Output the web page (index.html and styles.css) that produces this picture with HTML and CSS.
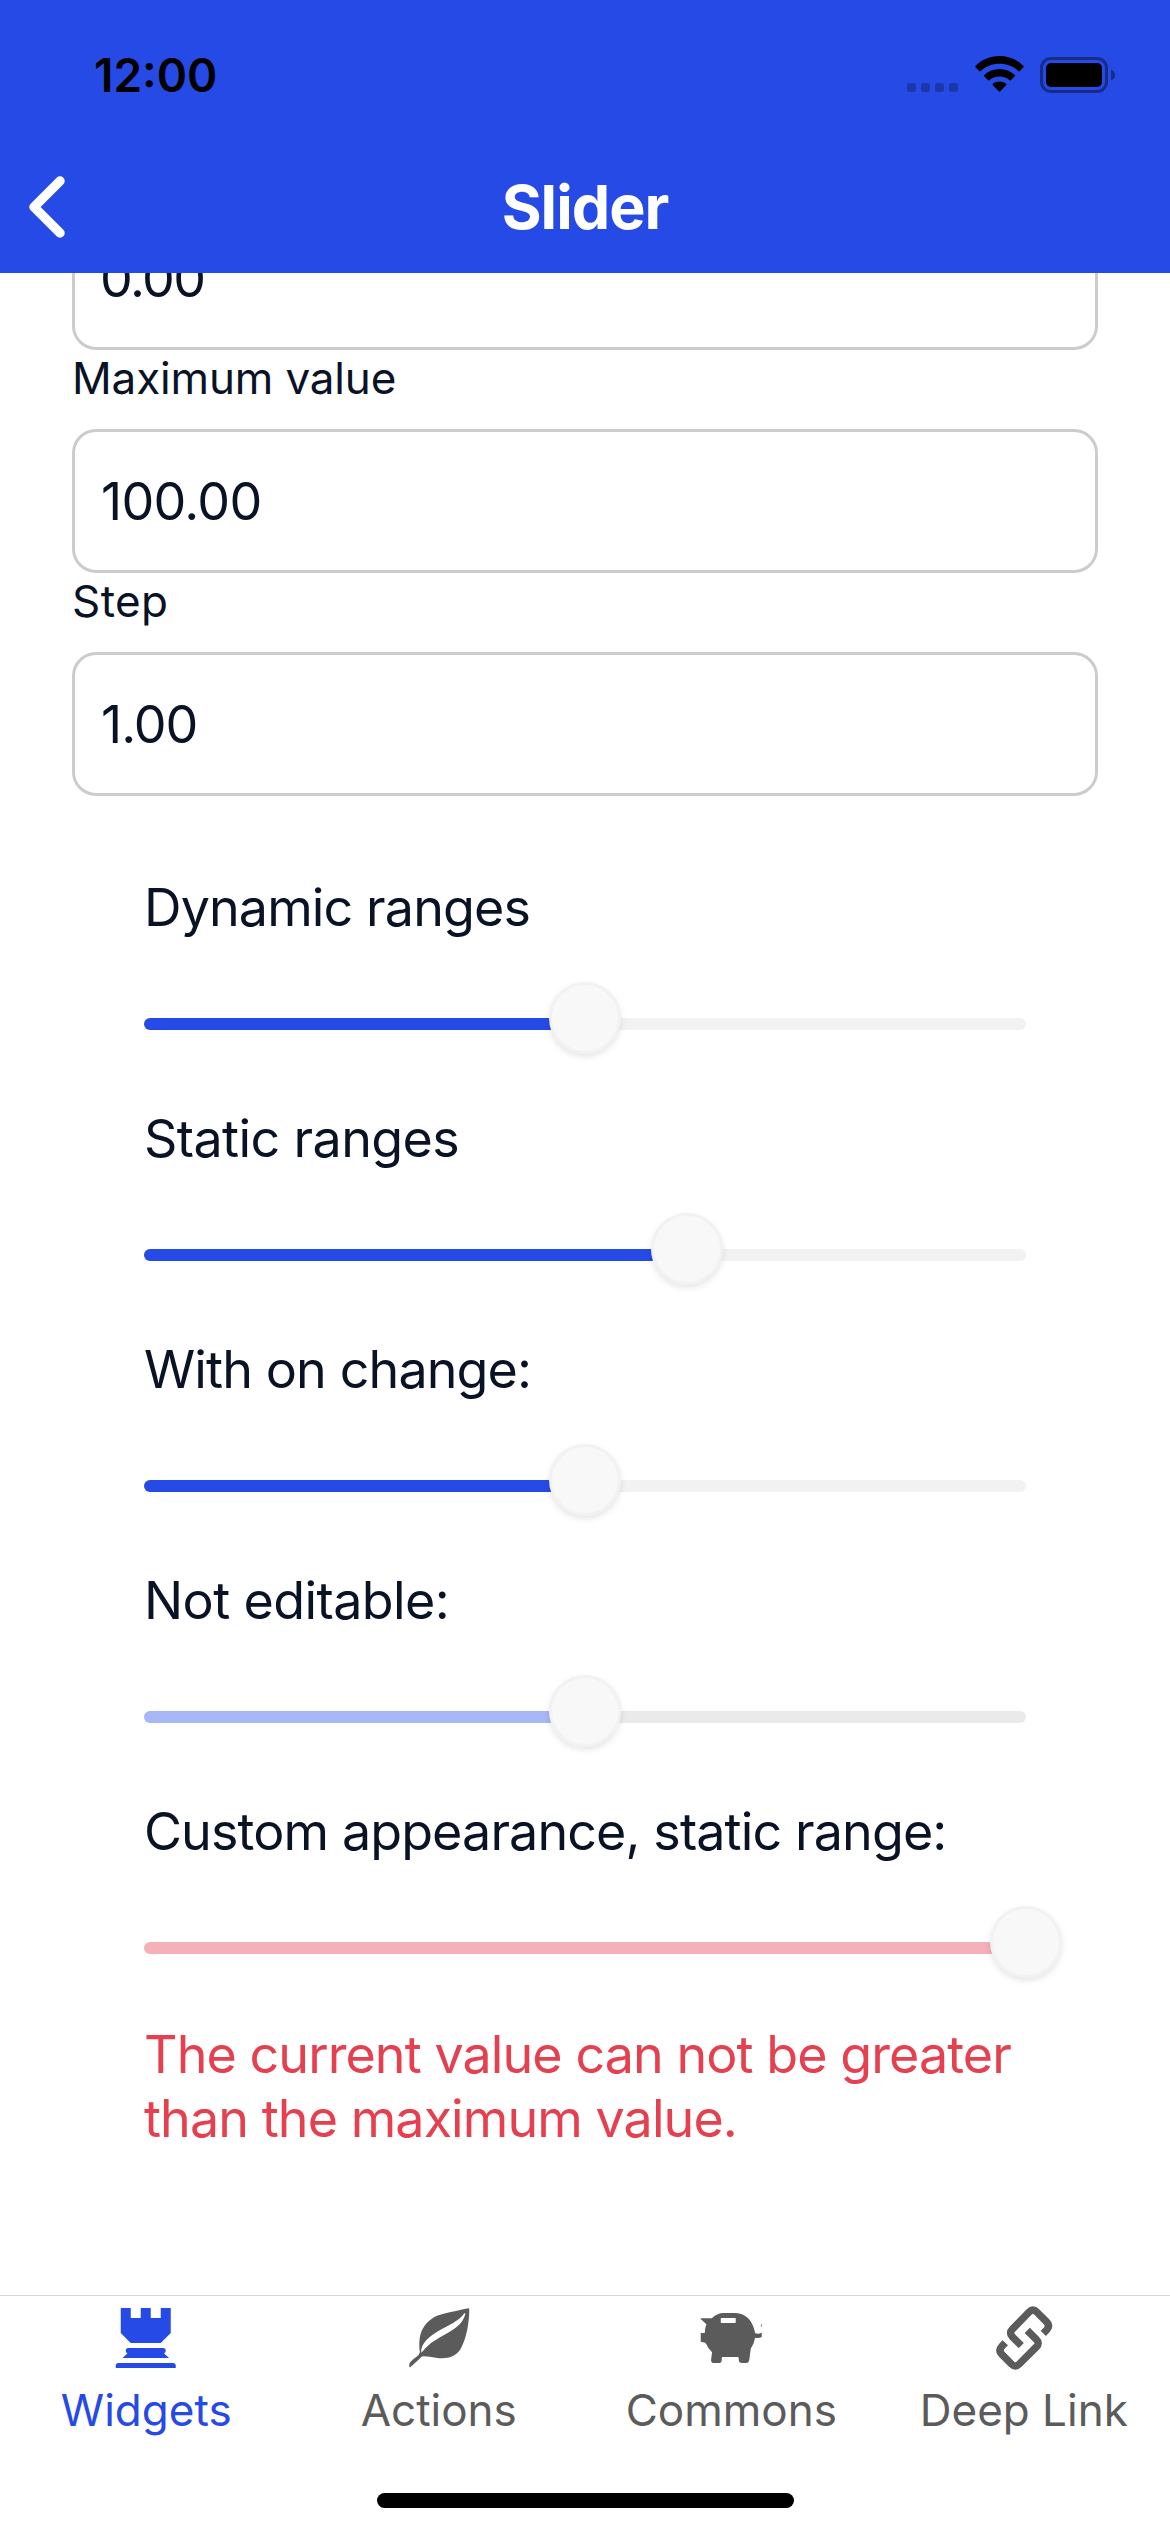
FILE: index.html
```html
<!DOCTYPE html>
<html lang="en">
<head>
<meta charset="utf-8">
<title>Slider</title>
<link rel="stylesheet" href="styles.css">
</head>
<body>
<header class="header">
  <div class="status">
    <span class="time">12:00</span>
    <div class="status-icons">
      <svg class="cell" viewBox="0 0 52 9"><rect width="9" height="9" rx="2.5"/><rect x="14" width="9" height="9" rx="2.5"/><rect x="28" width="9" height="9" rx="2.5"/><rect x="42" width="9" height="9" rx="2.5"/></svg>
      <svg class="wifi" viewBox="0 0 49 36"><path d="M24.5 0C33.800 0 42.500 3.700 48.500 10Q49 10.700 48.400 11.300L44.600 15.200Q44 15.700 43.400 15.100C38.500 10.400 31.800 7.800 24.500 7.800S10.500 10.400 5.600 15.100Q5 15.700 4.400 15.200L.6 11.300Q0 10.700.5 10C6.500 3.700 15.200 0 24.500 0Z"/><path d="M24.500 13C30.300 13 35.800 15.200 39.900 19Q40.400 19.700 39.800 20.300L35.900 24.200Q35.300 24.700 34.700 24.200C32 21.900 28.500 20.600 24.500 20.600S17 21.900 14.300 24.200Q13.700 24.700 13.100 24.200L9.200 20.300Q8.600 19.700 9.100 19C13.200 15.200 18.700 13 24.500 13Z"/><path d="M24.500 25.400C27 25.400 29.300 26.200 31.200 27.800Q31.800 28.400 31.200 29L25.300 35.200Q24.500 36 23.700 35.200L17.800 29Q17.200 28.400 17.800 27.800C19.700 26.200 22 25.400 24.500 25.400Z"/></svg>
      <svg class="battery" viewBox="0 0 75 36"><g opacity=".4"><rect x="1.500" y="1.500" width="65" height="33" rx="9.500" fill="none" stroke="#000" stroke-width="3"/><path d="M71 12.500Q75 14 75 18T71 23.500Z"/></g><rect x="6" y="6" width="56" height="24" rx="5"/></svg>
    </div>
  </div>
  <nav class="nav">
    <svg class="back" viewBox="0 0 36 62"><path d="M31 5L5 31L31 57"/></svg>
    <h1 class="title">Slider</h1>
  </nav>
</header>

<main class="content">
  <form class="form">
    <div class="field field-min">0.00</div>
    <label class="label">Maximum value</label>
    <div class="field field-max">100.00</div>
    <label class="label label-step">Step</label>
    <div class="field">1.00</div>
  </form>

  <section class="sliders">
    <div class="item">
      <div class="caption">Dynamic ranges</div>
      <div class="slider"><div class="track"><div class="fill" style="width:50%"></div></div><div class="thumb" style="left:50%"></div></div>
    </div>
    <div class="item">
      <div class="caption caption-loose">Static ranges</div>
      <div class="slider"><div class="track"><div class="fill" style="width:61.600%"></div></div><div class="thumb" style="left:61.600%"></div></div>
    </div>
    <div class="item">
      <div class="caption">With on change:</div>
      <div class="slider"><div class="track"><div class="fill" style="width:50%"></div></div><div class="thumb" style="left:50%"></div></div>
    </div>
    <div class="item">
      <div class="caption caption-loose">Not editable:</div>
      <div class="slider disabled"><div class="track"><div class="fill" style="width:50%"></div></div><div class="thumb" style="left:50%"></div></div>
    </div>
    <div class="item">
      <div class="caption">Custom appearance, static range:</div>
      <div class="slider invalid"><div class="track"><div class="fill" style="width:100%"></div></div><div class="thumb" style="left:100%"></div></div>
    </div>
    <p class="error">The current value can not be greater<br>than the maximum value.</p>
  </section>
</main>

<footer class="tabbar">
  <div class="tabs">
    <div class="tab active">
      <svg class="icon" viewBox="30.750 36 216 216"><path d="M63 54H93V84H123V54H153V84H183V54H213V129L183 159H93L63 129Z"/><path d="M86 174H190Q198 174 198 182Q198 187 193 190.500L208 204H68L83 190.500Q78 187 78 182Q78 174 86 174Z"/><path d="M56 219H220Q228 219 228 227V234H48V227Q48 219 56 219Z"/></svg>
      <span class="tab-label">Widgets</span>
    </div>
    <div class="tab">
      <svg class="icon" viewBox="38.250 36 216 216"><path fill-rule="evenodd" d="M234 55Q237 55 237 59C237 97 229 145 211 177C193 205 164 207 137 203C123 202 108 198 97 199Q92 201 88 206L61 231Q57 233 57 228Q56 220 61 215Q69 207 78 201Q87 195 89 187C86 163 86 139 97 117C110 93 132 77 160 71C184 67 210 59 234 55ZM93 188Q99 183 105 175C126 153 151 142 176 127C203 111 219 96 225 73Q226 69 222 70C215 80 207 88 190 98C161 114 128 129 108 151C96 164 92 176 93 188Z"/></svg>
      <span class="tab-label">Actions</span>
    </div>
    <div class="tab">
      <svg class="icon" viewBox="45.750 36 216 216"><path fill-rule="evenodd" d="M63 84.500H96C106 75 118 69 132 69H168C197 69 221 94 226 129Q234 133 241 129.500L246 128V141Q237 145 226 143Q224 160 213 176L209 207Q208 219 199 219H187Q177 219 177 210V204Q177 201 174 201H129Q126 201 126 204V209Q126 219 117 219H104Q93 219 94 209L97 187Q84 175 80 163Q77 157 70 157L63 155V129H75Q75 115 80 103L63 87ZM125 84Q123 84 123 87V97Q123 99 125 99H166Q168 99 168 97V86Q168 84 166 84Z"/><path d="M246 102Q242 105 243.500 108Q244 110 246 111Z"/></svg>
      <span class="tab-label">Commons</span>
    </div>
    <div class="tab">
      <svg class="icon" viewBox="38.250 36 216 216"><path class="link" d="M138 167L111.500 140.500Q100 129 111.500 117.500L161.500 66Q173 54 184.500 66L213.500 95Q226 107 214 120L204 130"/><path class="link" d="M156 121L183 148Q195 159.500 183 171L132 222Q120 234 108.500 222L80.500 194Q68 182 80 169L90 158"/></svg>
      <span class="tab-label">Deep Link</span>
    </div>
  </div>
  <div class="home"></div>
</footer>
</body>
</html>
```

FILE: styles.css
```css
* { box-sizing: border-box; }

body {
  margin: 0;
  width: 1170px;
  height: 2532px;
  display: flex;
  flex-direction: column;
  overflow: hidden;
  background: #fff;
  color: #0a1326;
  font-family: Inter, "Liberation Sans", sans-serif;
}

svg { display: block; }

.header {
  flex: none;
  height: 273px;
  background: #264ae5;
  position: relative;
}

.status {
  height: 141px;
  padding: 8px 55px 0 94px;
  display: flex;
  align-items: center;
  justify-content: space-between;
  color: #000;
}

.time { font-size: 46px; font-weight: 600; letter-spacing: 0; }

.status-icons { display: flex; align-items: flex-end; }
.cell { width: 52px; height: 9px; margin: 0 16px 1px 0; opacity: .25; }
.wifi { width: 49px; height: 36px; margin: 0 16px 1px 0; }
.battery { width: 75px; height: 36px; }

.nav {
  height: 132px;
  display: grid;
  grid-template-columns: 1fr auto 1fr;
  align-items: center;
}

.back {
  width: 36px;
  height: 62px;
  margin-left: 29px;
  fill: none;
  stroke: #fff;
  stroke-width: 9.5;
  stroke-linecap: round;
  stroke-linejoin: round;
}

.title { margin: 0; font-size: 61px; font-weight: 700; letter-spacing: -1px; color: #fff; }

.content { flex: 1; min-height: 0; overflow: hidden; }

.form { margin: -67px 72px 0; display: flex; flex-direction: column; }

.field {
  height: 144px;
  padding-left: 26px;
  display: flex;
  align-items: center;
  border: 3px solid #ccc;
  border-radius: 24px;
  font-size: 52px;
  letter-spacing: -1px;
}

.field-min { padding-left: 25px; letter-spacing: -1.6px; }
.field-max { letter-spacing: -0.7px; }

.label { margin-bottom: 23px; font-size: 44px; line-height: 56px; letter-spacing: -0.15px; }
.label-step { letter-spacing: 0.4px; }

.sliders { padding: 80px 144px 0; display: flex; flex-direction: column; gap: 53px; }

.item { display: flex; flex-direction: column; gap: 42px; }

.caption { font-size: 52px; line-height: 64px; letter-spacing: -0.88px; white-space: nowrap; }
.caption-loose { letter-spacing: -0.6px; }

.slider { position: relative; height: 72px; padding-top: 36px; }

.track { height: 12px; border-radius: 6px; background: #f2f2f2; overflow: hidden; }
.fill { height: 12px; background: #264ae5; }

.disabled .track { background: #eaeaea; }
.disabled .fill { background: #a8b7f5; }
.invalid .fill { background: #f5b0b8; }

.thumb {
  position: absolute;
  top: 0;
  width: 72px;
  height: 72px;
  margin-left: -36px;
  border: 3px solid #f2f2f2;
  border-radius: 50%;
  background: #f8f8f8;
  box-shadow: 0 3px 6px rgba(0, 0, 0, .1);
}

.error { margin: -8px 0 0; font-size: 52px; line-height: 64px; letter-spacing: -0.92px; white-space: nowrap; color: #e5404f; }

.tabbar {
  flex: none;
  height: 237px;
  border-top: 1px solid #d8d8d8;
  display: flex;
  flex-direction: column;
  align-items: center;
  justify-content: space-between;
  padding: 6px 0 24px;
}

.tabs { width: 100%; display: grid; grid-template-columns: repeat(4, 1fr); color: #5b5b5b; }
.tab { display: flex; flex-direction: column; align-items: center; gap: 10px; }
.active { color: #264ae5; }
.icon { width: 72px; height: 72px; fill: currentColor; }
.link { fill: none; stroke: currentColor; stroke-width: 22; }
.tab-label { font-size: 44px; line-height: 52px; }

.home { width: 417px; height: 15px; border-radius: 8px; background: #000; }
```
